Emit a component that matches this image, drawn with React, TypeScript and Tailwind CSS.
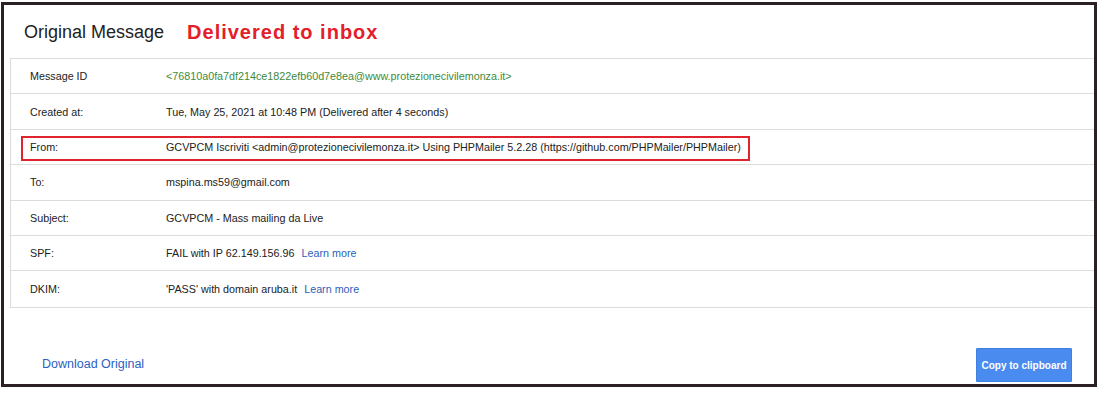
import React from 'react';

const rows: { label: string; value: React.ReactNode; boxed?: boolean }[] = [
  {
    label: 'Message ID',
    value: <span className="text-[#3d8b40]">&lt;76810a0fa7df214ce1822efb60d7e8ea@www.protezionecivilemonza.it&gt;</span>,
  },
  { label: 'Created at:', value: 'Tue, May 25, 2021 at 10:48 PM (Delivered after 4 seconds)' },
  {
    label: 'From:',
    value: 'GCVPCM Iscriviti <admin@protezionecivilemonza.it> Using PHPMailer 5.2.28 (https://github.com/PHPMailer/PHPMailer)',
    boxed: true,
  },
  { label: 'To:', value: 'mspina.ms59@gmail.com' },
  { label: 'Subject:', value: 'GCVPCM - Mass mailing da Live' },
  {
    label: 'SPF:',
    value: (
      <>
        FAIL with IP 62.149.156.96 <a className="ml-[4px] text-[#2a5fba]">Learn more</a>
      </>
    ),
  },
  {
    label: 'DKIM:',
    value: (
      <>
        'PASS' with domain aruba.it <a className="ml-[4px] text-[#2a5fba]">Learn more</a>
      </>
    ),
  },
];

const App = () => {
  return (
    <div className="w-[1104px] h-[397px] bg-white font-['Liberation_Sans',Arial,sans-serif] pt-[2px] pl-[1px]">
      <div className="w-[1096px] h-[385px] border-[3px] border-[#2b2122] flex flex-col">
        {/* Header */}
        <div className="h-[53px] flex items-center pl-[20px] pt-[1px]">
          <span className="text-[18px] text-[#222]">Original Message</span>
          <span className="ml-[23px] text-[20px] font-bold text-[#e3202a] tracking-[1px]">Delivered to inbox</span>
        </div>

        {/* Details table */}
        <div className="ml-[6px] border border-r-0 border-[#dcdcdc]">
          {rows.map((r, i) => (
            <div
              key={r.label}
              className={`h-[35.4px] flex items-center text-[10.75px] text-[#222] ${i < rows.length - 1 ? 'border-b border-[#dcdcdc]' : ''} relative`}
            >
              <div className="w-[155px] pl-[19px] shrink-0">{r.label}</div>
              <div className="whitespace-pre">{r.value}</div>
              {r.boxed && (
                <div className="absolute left-[10px] top-[6px] w-[729px] h-[25px] border-[2.5px] border-[#e0242e] pointer-events-none" />
              )}
            </div>
          ))}
        </div>

        {/* Footer */}
        <div className="flex-1 flex items-end justify-between pl-[38px] pr-[22px] pb-[2px]">
          <a className="text-[12.5px] text-[#2a62c2] mb-[8px]">Download Original</a>
          <button className="w-[96px] h-[34px] bg-[#4a8bf0] border border-[#3f7fe0] text-white text-[10px] font-bold rounded-[1px]">
            Copy to clipboard
          </button>
        </div>
      </div>
    </div>
  );
};

export default App;
